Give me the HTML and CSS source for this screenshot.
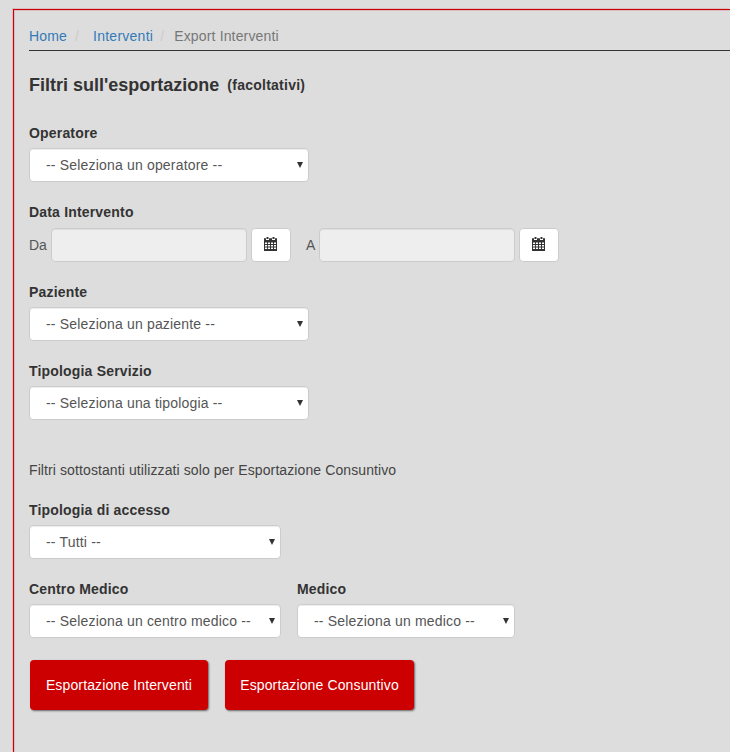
FILE: index.html
```html
<!DOCTYPE html>
<html lang="it">
<head>
<meta charset="utf-8">
<title>Export Interventi</title>
<link rel="stylesheet" href="styles.css">
</head>
<body>
<main class="panel">
  <nav class="crumbs">
    <a href="#">Home</a><span class="sep">/</span>
    <a href="#">Interventi</a><span class="sep sep-last">/</span>
    <span class="current">Export Interventi</span>
  </nav>
  <h1 class="title">Filtri sull'esportazione <small>(facoltativi)</small></h1>

  <div class="group first">
    <label class="lbl">Operatore</label>
    <div class="sel w280"><select><option>-- Seleziona un operatore --</option></select></div>
  </div>

  <div class="group">
    <label class="lbl lbl-dates">Data Intervento</label>
    <div class="dates">
      <span class="da">Da</span>
      <input class="date" type="text" disabled>
      <button class="cal" type="button" aria-label="Calendario">
        <svg viewBox="0 0 13 14" width="13" height="14"><path fill="#333" d="M2.5 0h2v2h-2zM8.500 0h2v2h-2zM0 1.200h2V3h3V1.200h3V3h3V1.200h2V14H0zM1 5.500v1.600h2.100V5.500zm3 0v1.600h2V5.500zm3 0v1.600h2V5.500zm3 0v1.600h2V5.500zM1 8v1.600h2.100V8zm3 0v1.600h2V8zm3 0v1.600h2V8zm3 0v1.600h2V8zM1 10.500v1.600h2.100v-1.600zm3 0v1.600h2v-1.600zm3 0v1.600h2v-1.600zm3 0v1.600h2v-1.600z"/></svg>
      </button>
      <span class="a">A</span>
      <input class="date" type="text" disabled>
      <button class="cal" type="button" aria-label="Calendario">
        <svg viewBox="0 0 13 14" width="13" height="14"><path fill="#333" d="M2.5 0h2v2h-2zM8.500 0h2v2h-2zM0 1.200h2V3h3V1.200h3V3h3V1.200h2V14H0zM1 5.500v1.600h2.100V5.500zm3 0v1.600h2V5.500zm3 0v1.600h2V5.500zm3 0v1.600h2V5.500zM1 8v1.600h2.100V8zm3 0v1.600h2V8zm3 0v1.600h2V8zm3 0v1.600h2V8zM1 10.500v1.600h2.100v-1.600zm3 0v1.600h2v-1.600zm3 0v1.600h2v-1.600zm3 0v1.600h2v-1.600z"/></svg>
      </button>
    </div>
  </div>

  <div class="group">
    <label class="lbl">Paziente</label>
    <div class="sel w280"><select><option>-- Seleziona un paziente --</option></select></div>
  </div>

  <div class="group">
    <label class="lbl">Tipologia Servizio</label>
    <div class="sel w280"><select><option>-- Seleziona una tipologia --</option></select></div>
  </div>

  <p class="note">Filtri sottostanti utilizzati solo per Esportazione Consuntivo</p>

  <div class="group after-note">
    <label class="lbl">Tipologia di accesso</label>
    <div class="sel w252"><select><option>-- Tutti --</option></select></div>
  </div>

  <div class="group pair">
    <div>
      <label class="lbl">Centro Medico</label>
      <div class="sel w252"><select><option>-- Seleziona un centro medico --</option></select></div>
    </div>
    <div>
      <label class="lbl">Medico</label>
      <div class="sel w218"><select><option>-- Seleziona un medico --</option></select></div>
    </div>
  </div>

  <div class="actions">
    <button class="btn b1" type="button">Esportazione Interventi</button>
    <button class="btn b2" type="button">Esportazione Consuntivo</button>
  </div>
</main>
</body>
</html>
```

FILE: styles.css
```css
html, body {
  margin: 0;
  height: 752px;
  width: 730px;
  overflow: hidden;
  background: #ddd;
}
body {
  padding: 9px 0 0 13px;
  box-sizing: border-box;
  font-family: "Liberation Sans", Arial, sans-serif;
  font-size: 14px;
  line-height: 20px;
  color: #333;
}
.panel {
  width: 717px;
  height: 743px;
  overflow: hidden;
  box-sizing: border-box;
  border-left: 1px solid #c00;
  border-top: 1px solid #c00;
  box-shadow: -1px -1px 0 rgba(204,0,40,.14), inset 1px 1px 0 rgba(204,0,40,.14);
  padding: 16px 0 0 15px;
}
.crumbs {
  height: 24px;
  border-bottom: 1px solid #333;
  letter-spacing: 0.15px;
}
.crumbs a { color: #337ab7; text-decoration: none; }
.crumbs a + .sep + a { letter-spacing: 0.25px; }
.crumbs .sep { color: #ccc; padding: 0 10px 0 8px; }
.crumbs .sep-last { padding: 0 6px 0 7px; }
.crumbs .current { color: #777; }
.title {
  margin: 23px 0 0;
  font-size: 18px;
  line-height: 22px;
  font-weight: bold;
}
.title small { font-size: 14px; margin-left: 3px; letter-spacing: 0.25px; vertical-align: 1px; }
.group { margin-top: 20px; }
.group.first { margin-top: 27px; }
.lbl {
  display: block;
  font-weight: bold;
  height: 20px;
  margin-bottom: 5px;
  letter-spacing: 0.18px;
}
.lbl-dates { margin-bottom: 6px; }
.sel { position: relative; }
.sel::after {
  content: "";
  position: absolute;
  right: 6px;
  top: 14px;
  border-left: 3px solid transparent;
  border-right: 3px solid transparent;
  border-top: 6px solid #333;
  pointer-events: none;
}
.w280 { width: 280px; }
.w252 { width: 252px; }
.w218 { width: 218px; }
select {
  appearance: none;
  display: block;
  width: 100%;
  height: 34px;
  box-sizing: border-box;
  padding: 0 12px 0 16px;
  border: 1px solid #ccc;
  border-radius: 4px;
  background: #fff;
  font: 14px "Liberation Sans", Arial, sans-serif;
  letter-spacing: 0.18px;
  color: #555;
  box-shadow: inset 0 1px 1px rgba(0,0,0,.075);
}
.dates { display: flex; align-items: center; }
.da { width: 22px; color: #555; }
.a { width: 13px; margin-left: 15px; color: #555; }
.date {
  width: 196px;
  height: 34px;
  box-sizing: border-box;
  border: 1px solid #ccc;
  border-radius: 4px;
  background: #eee;
  box-shadow: inset 0 1px 1px rgba(0,0,0,.075);
  padding: 0;
  margin: 0;
}
.cal {
  width: 40px;
  height: 34px;
  margin-left: 4px;
  padding: 0 1px 2px 0;
  box-sizing: border-box;
  border: 1px solid #ccc;
  border-radius: 4px;
  background: #fff;
  display: flex;
  align-items: center;
  justify-content: center;
}
.note { margin: 40px 0 0; color: #444; letter-spacing: 0.1px; }
.group.after-note { margin-top: 20px; }
.pair { display: flex; gap: 16px; }
.actions { display: flex; margin: 22px 0 0 1px; gap: 17px; }
.btn {
  height: 50px;
  box-sizing: border-box;
  padding: 0;
  border: 0;
  border-radius: 4px;
  background: #c00;
  color: #fff;
  font: 14px "Liberation Sans", Arial, sans-serif;
  letter-spacing: 0.13px;
  box-shadow: 1px 1px 2px #666;
}
.b1 { width: 178px; }
.b2 { width: 189px; }
```
